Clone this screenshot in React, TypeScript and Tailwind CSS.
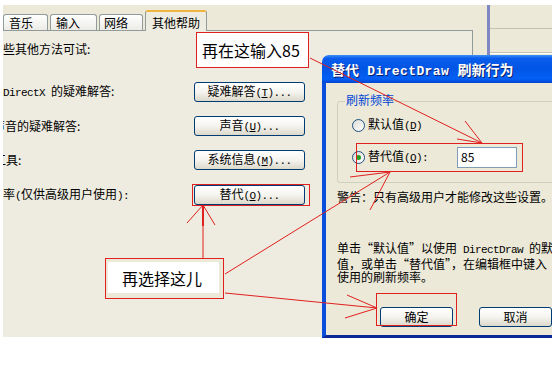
import type { ReactNode } from "react";

// latin text in the SimSun look: half-width monospace
function M({ children }: { children: ReactNode }) {
  return <span className="font-['Liberation_Mono',monospace] text-[11px] tracking-[-0.6px]">{children}</span>;
}

function XpButton({ className, children }: { className: string; children: ReactNode }) {
  return (
    <div
      className={`${className} flex items-center justify-center rounded-[3px] border border-[#003C74] bg-linear-to-b from-white via-[#F5F4EF] to-[#DCD8CB] leading-[16px] whitespace-nowrap`}
    >
      <span>{children}</span>
    </div>
  );
}

function Tab({ label, className, active }: { label: string; className: string; active?: boolean }) {
  if (active) {
    return (
      <div
        className={`${className} relative -mb-px h-[21px] flex items-center pt-[2px] rounded-t-[3px] border-x border-t-2 border-x-[#919B9C] border-t-[#F2B441] bg-[#EEECE1] leading-[16px]`}
      >
        {label}
      </div>
    );
  }
  return (
    <div
      className={`${className} h-[16px] flex items-center rounded-t-[3px] border border-b-0 border-[#919B9C] bg-linear-to-b from-white to-[#ECEBE6] leading-[16px]`}
    >
      {label}
    </div>
  );
}

function Radio({ checked }: { checked?: boolean }) {
  return (
    <div className="w-[13px] h-[13px] shrink-0 rounded-full border border-[#1C5180] bg-linear-to-br from-[#DCDBD5] to-white flex items-center justify-center">
      {checked && <div className="w-[5px] h-[5px] rounded-full bg-[#21A121]" />}
    </div>
  );
}

export default function App() {
  return (
    <div className="relative w-[552px] h-[384px] overflow-hidden bg-white text-[12px] text-black font-['Noto_Sans_CJK_SC',sans-serif]">
      {/* windows behind */}
      <div className="flex pt-[5px] pl-[3px]">
        <div className="w-[484px] h-[332px] bg-[#ECE9D8] overflow-hidden flex flex-col">
          <div className="relative z-10 flex items-end gap-[2px] h-[25px]">
            <Tab label="音乐" className="w-[45px] pl-[5px]" />
            <Tab label="输入" className="w-[47px] pl-[5px]" />
            <Tab label="网络" className="w-[44px] pl-[4px]" />
            <Tab label="其他帮助" className="w-[62px] pl-[6px]" active />
          </div>
          <div className="w-[470px] flex-1 border-t border-r border-[#919B9C] bg-[#EEECE1] pt-[10px] flex flex-col leading-[16px] whitespace-nowrap">
            <div className="h-[16px]">些其他方法可试:</div>
            <div className="mt-[25px] flex items-center h-[20px]">
              <div className="w-[191px]">
                <M>DirectX </M>的疑难解答:
              </div>
              <XpButton className="w-[111px] h-[20px]">
                疑难解答<M>(<u>T</u>)...</M>
              </XpButton>
            </div>
            <div className="mt-[14px] flex items-center h-[20px]">
              <div className="w-[191px]">
                <span className="-ml-[10px]">声音的疑难解答:</span>
              </div>
              <XpButton className="w-[111px] h-[20px]">
                声音<M>(<u>U</u>)...</M>
              </XpButton>
            </div>
            <div className="mt-[14px] flex items-center h-[20px]">
              <div className="w-[191px]">
                <span className="-ml-[9px]">工具:</span>
              </div>
              <XpButton className="w-[111px] h-[20px]">
                系统信息<M>(<u>M</u>)...</M>
              </XpButton>
            </div>
            <div className="mt-[15px] flex items-center h-[20px]">
              <div className="w-[191px]">
                率<M>(</M>仅供高级用户使用<M>):</M>
              </div>
              <XpButton className="w-[111px] h-[20px]">
                替代<M>(<u>O</u>)...</M>
              </XpButton>
            </div>
          </div>
        </div>
        <div className="w-[3px] h-[50px] bg-[#8088C4]" />
        <div className="flex-1 h-[332px] bg-[#ECE9D8] flex flex-col">
          <div className="h-[23px]" />
          <div className="h-[25px] border-y border-y-[#C5C2B2] shadow-[0_1px_0_white]" />
        </div>
      </div>

      {/* DirectDraw dialog */}
      <div className="absolute left-[322px] top-[55px] w-[240px] h-[283px] flex flex-col">
        <div className="h-[28px] shrink-0 rounded-tl-[7px] bg-[linear-gradient(180deg,#3D8FF5_0%,#0A5CEC_12%,#0055E5_50%,#0460F5_85%,#0045D0_100%)] flex items-center pl-[9px] pt-[3px] text-white font-bold text-[14px] whitespace-nowrap [text-shadow:1px_1px_0_#0A1E6E]">
          <span>
            替代<span className="font-['Liberation_Mono',monospace] text-[13px] tracking-[0.4px]"> DirectDraw </span>刷新行为
          </span>
        </div>
        <div className="flex-1 bg-[#ECE9D8] border-l-4 border-b-[3px] border-l-[#0B4EDC] border-b-[#0A2896] pl-[11px] pt-[18px] flex flex-col leading-[16px] whitespace-nowrap">
          <div className="relative w-[230px] h-[82px] shrink-0 rounded-[3px] border border-[#D0D0BF] pl-[14px] pt-[15px] flex flex-col">
            <div className="absolute -top-[10px] left-[7px] px-[1px] bg-[#ECE9D8] text-[#0046D5]">刷新频率</div>
            <div className="flex items-center h-[16px]">
              <Radio />
              <span className="ml-[3px]">
                默认值<M>(<u>D</u>)</M>
              </span>
            </div>
            <div className="mt-[13px] flex items-center h-[22px]">
              <Radio checked />
              <span className="ml-[3px] w-[89px]">
                替代值<M>(<u>O</u>):</M>
              </span>
              <div className="w-[60px] h-[21px] border border-[#7F9DB9] bg-white pl-[3px] flex items-center">85</div>
            </div>
          </div>
          <div className="mt-[6px] h-[16px]">警告：只有高级用户才能修改这些设置。</div>
          <div className="mt-[36px] leading-[13px]">
            单击“默认值”以使用<M> DirectDraw </M>的默认
            <br />
            值，或单击“替代值”，在编辑框中键入
            <br />
            使用的刷新频率。
          </div>
          <div className="mt-[24px] ml-[43px] flex gap-[26px]">
            <XpButton className="w-[73px] h-[20px] shrink-0">确定</XpButton>
            <XpButton className="w-[73px] h-[20px] shrink-0">取消</XpButton>
          </div>
        </div>
      </div>

      {/* annotations */}
      <div className="absolute left-[196px] top-[32px] w-[113px] h-[36px] border border-[#E0201E] bg-white flex items-center pl-[5px] text-[16px] leading-[20px]">
        再在这输入85
      </div>
      <div className="absolute left-[192px] top-[184px] w-[118px] h-[22px] border border-[#E0201E]" />
      <div className="absolute left-[356px] top-[143px] w-[167px] h-[29px] border border-[#E0201E]" />
      <div className="absolute left-[376px] top-[293px] w-[81px] h-[33px] border border-[#E0201E]" />
      <div className="absolute left-[105px] top-[258px] w-[119px] h-[41px] border border-[#E0201E] bg-[#ECE9D8] pl-[2px] pt-[3px]">
        <div className="w-[111px] h-[31px] bg-white flex items-center pl-[14px] text-[16px] leading-[20px]">再选择这儿</div>
      </div>

      <svg className="absolute inset-0 pointer-events-none" width="552" height="384" viewBox="0 0 552 384" fill="none" stroke="#E0201E" strokeWidth="1">
        <path d="M310 58 L482 143 M465 121 L482 143 M457 139 L482 143" />
        <path d="M203 258 L203 205 M187 223 L203 205 M215 225 L203 205" />
        <path d="M203 205 L203 226" strokeWidth="2" />
        <path d="M225 274 L390 172 M350 177 L390 172 M370 210 L390 172" />
        <path d="M225 293 L377 308 M347 295 L377 308 M345 318 L377 308" />
      </svg>
    </div>
  );
}
